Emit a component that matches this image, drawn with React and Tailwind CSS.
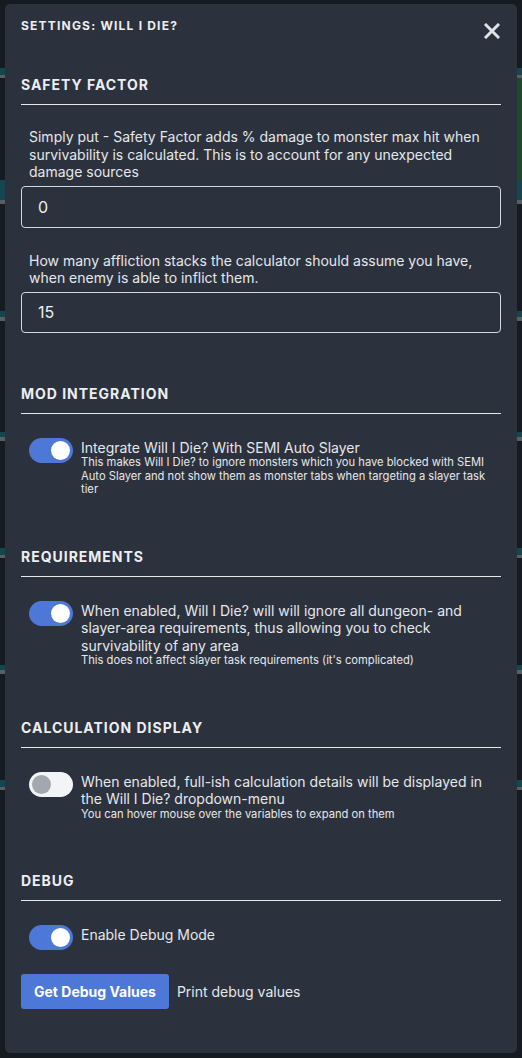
import { useState } from 'react';

const font = { fontFamily: 'Inter, "Noto Sans", sans-serif' };

// stripes of the game screen peeking out behind the modal
const stripes = [
  { top: 68, h: 7, c: 'bg-[#144650]' },
  { top: 75, h: 3, c: 'bg-[#5a5e63]' },
  { top: 180, h: 20, c: 'bg-[#144650]' },
  { top: 200, h: 4, c: 'bg-[#5a5e63]' },
  { top: 311, h: 6, c: 'bg-[#144650]' },
  { top: 317, h: 4, c: 'bg-[#5a5e63]' },
  { top: 432, h: 5, c: 'bg-[#144650]' },
  { top: 437, h: 4, c: 'bg-[#5a5e63]' },
  { top: 548, h: 7, c: 'bg-[#144650]' },
  { top: 555, h: 3, c: 'bg-[#5a5e63]' },
  { top: 665, h: 5, c: 'bg-[#144650]' },
  { top: 670, h: 4, c: 'bg-[#5a5e63]' },
  { top: 780, h: 7, c: 'bg-[#144650]' },
  { top: 787, h: 3, c: 'bg-[#5a5e63]' },
];

const Toggle = ({ on, onChange }) => (
  <button
    onClick={onChange}
    className={`relative shrink-0 w-[44px] h-[25px] rounded-full ${on ? 'bg-[#4d78d8]' : 'bg-[#f3f4f6]'}`}
  >
    <span
      className={`absolute top-[3px] w-[19px] h-[19px] rounded-full ${
        on ? 'left-[22px] bg-white' : 'left-[3px] bg-[#a3a8b0]'
      }`}
    />
  </button>
);

const SectionTitle = ({ children, mt }) => (
  <div
    className={`${mt} pb-[11px] border-b border-[#e5e7eb] text-[14px] font-bold tracking-[0.07em] uppercase text-[#eceef1] leading-[17px]`}
  >
    {children}
  </div>
);

const SwitchRow = ({ on, onChange, label, note }) => (
  <div className="flex gap-2 pl-2 mt-[24px]">
    <Toggle on={on} onChange={onChange} />
    <div className="pt-[1px]">
      <div className="text-[14px] leading-[17.5px] text-[#e5e7eb]">{label}</div>
      {note && <div className="text-[11.2px] leading-[13.5px] text-[#e5e7eb]">{note}</div>}
    </div>
  </div>
);

export default function App() {
  const [semi, setSemi] = useState(true);
  const [req, setReq] = useState(true);
  const [calc, setCalc] = useState(false);
  const [debug, setDebug] = useState(true);

  return (
    <div className="relative min-h-[1058px] bg-[#161a21] p-[5px] pt-[4px]" style={font}>
      {/* backdrop */}
      <div className="absolute inset-0">
        {stripes.map((s, i) => (
          <div key={i} className={`absolute left-0 right-0 ${s.c}`} style={{ top: s.top, height: s.h }} />
        ))}
        <div className="absolute right-0 w-[6px] bg-[#1d4a2c]" style={{ top: 78, height: 102 }} />
      </div>

      <div className="relative z-10 min-h-[1049px] w-[512px] bg-[#2c323d] rounded-[5px] px-4 pt-[14px] text-[#e5e7eb]">
        {/* Header */}
        <div className="flex items-start justify-between h-[20px]">
          <div className="text-[12px] font-bold tracking-[0.1em] text-[#eceef1] leading-[16px]">
            SETTINGS: WILL I DIE?
          </div>
          <svg width="16" height="16" viewBox="0 0 16 16" className="mt-[4.5px] mr-[1px]">
            <path d="M2 2 L14 14 M14 2 L2 14" stroke="#dfe2e6" strokeWidth="3" strokeLinecap="square" />
          </svg>
        </div>

        {/* Safety factor */}
        <SectionTitle mt="mt-[38px]">Safety Factor</SectionTitle>
        <p className="px-2 mt-[23px] text-[14px] leading-[17.5px]">
          Simply put - Safety Factor adds % damage to monster max hit when survivability is calculated. This is to account for any unexpected damage sources
        </p>
        <input
          defaultValue="0"
          className="mt-[5px] w-full h-[42px] px-4 rounded-[4px] border border-[#d4d7dc] bg-transparent text-[16px] text-[#eceef1] outline-none"
        />
        <p className="px-2 mt-[24px] text-[14px] leading-[17.5px]">
          How many affliction stacks the calculator should assume you have, when enemy is able to inflict them.
        </p>
        <input
          defaultValue="15"
          className="mt-[5px] w-full h-[41px] px-4 rounded-[4px] border border-[#d4d7dc] bg-transparent text-[16px] text-[#eceef1] outline-none"
        />

        {/* Mod integration */}
        <SectionTitle mt="mt-[52px]">Mod Integration</SectionTitle>
        <SwitchRow
          on={semi}
          onChange={() => setSemi(!semi)}
          label="Integrate Will I Die? With SEMI Auto Slayer"
          note="This makes Will I Die? to ignore monsters which you have blocked with SEMI Auto Slayer and not show them as monster tabs when targeting a slayer task tier"
        />

        {/* Requirements */}
        <SectionTitle mt="mt-[51px]">Requirements</SectionTitle>
        <SwitchRow
          on={req}
          onChange={() => setReq(!req)}
          label="When enabled, Will I Die? will will ignore all dungeon- and slayer-area requirements, thus allowing you to check survivability of any area"
          note="This does not affect slayer task requirements (it's complicated)"
        />

        {/* Calculation display */}
        <SectionTitle mt="mt-[51px]">Calculation Display</SectionTitle>
        <SwitchRow
          on={calc}
          onChange={() => setCalc(!calc)}
          label="When enabled, full-ish calculation details will be displayed in the Will I Die? dropdown-menu"
          note="You can hover mouse over the variables to expand on them"
        />

        {/* Debug */}
        <SectionTitle mt="mt-[51px]">Debug</SectionTitle>
        <SwitchRow on={debug} onChange={() => setDebug(!debug)} label="Enable Debug Mode" />
        <div className="flex items-center gap-2 mt-[24px]">
          <button className="h-[35px] px-[13px] rounded-[3px] bg-[#4d78d8] text-white text-[14px] font-bold">
            Get Debug Values
          </button>
          <span className="text-[14px]">Print debug values</span>
        </div>
      </div>
    </div>
  );
}
